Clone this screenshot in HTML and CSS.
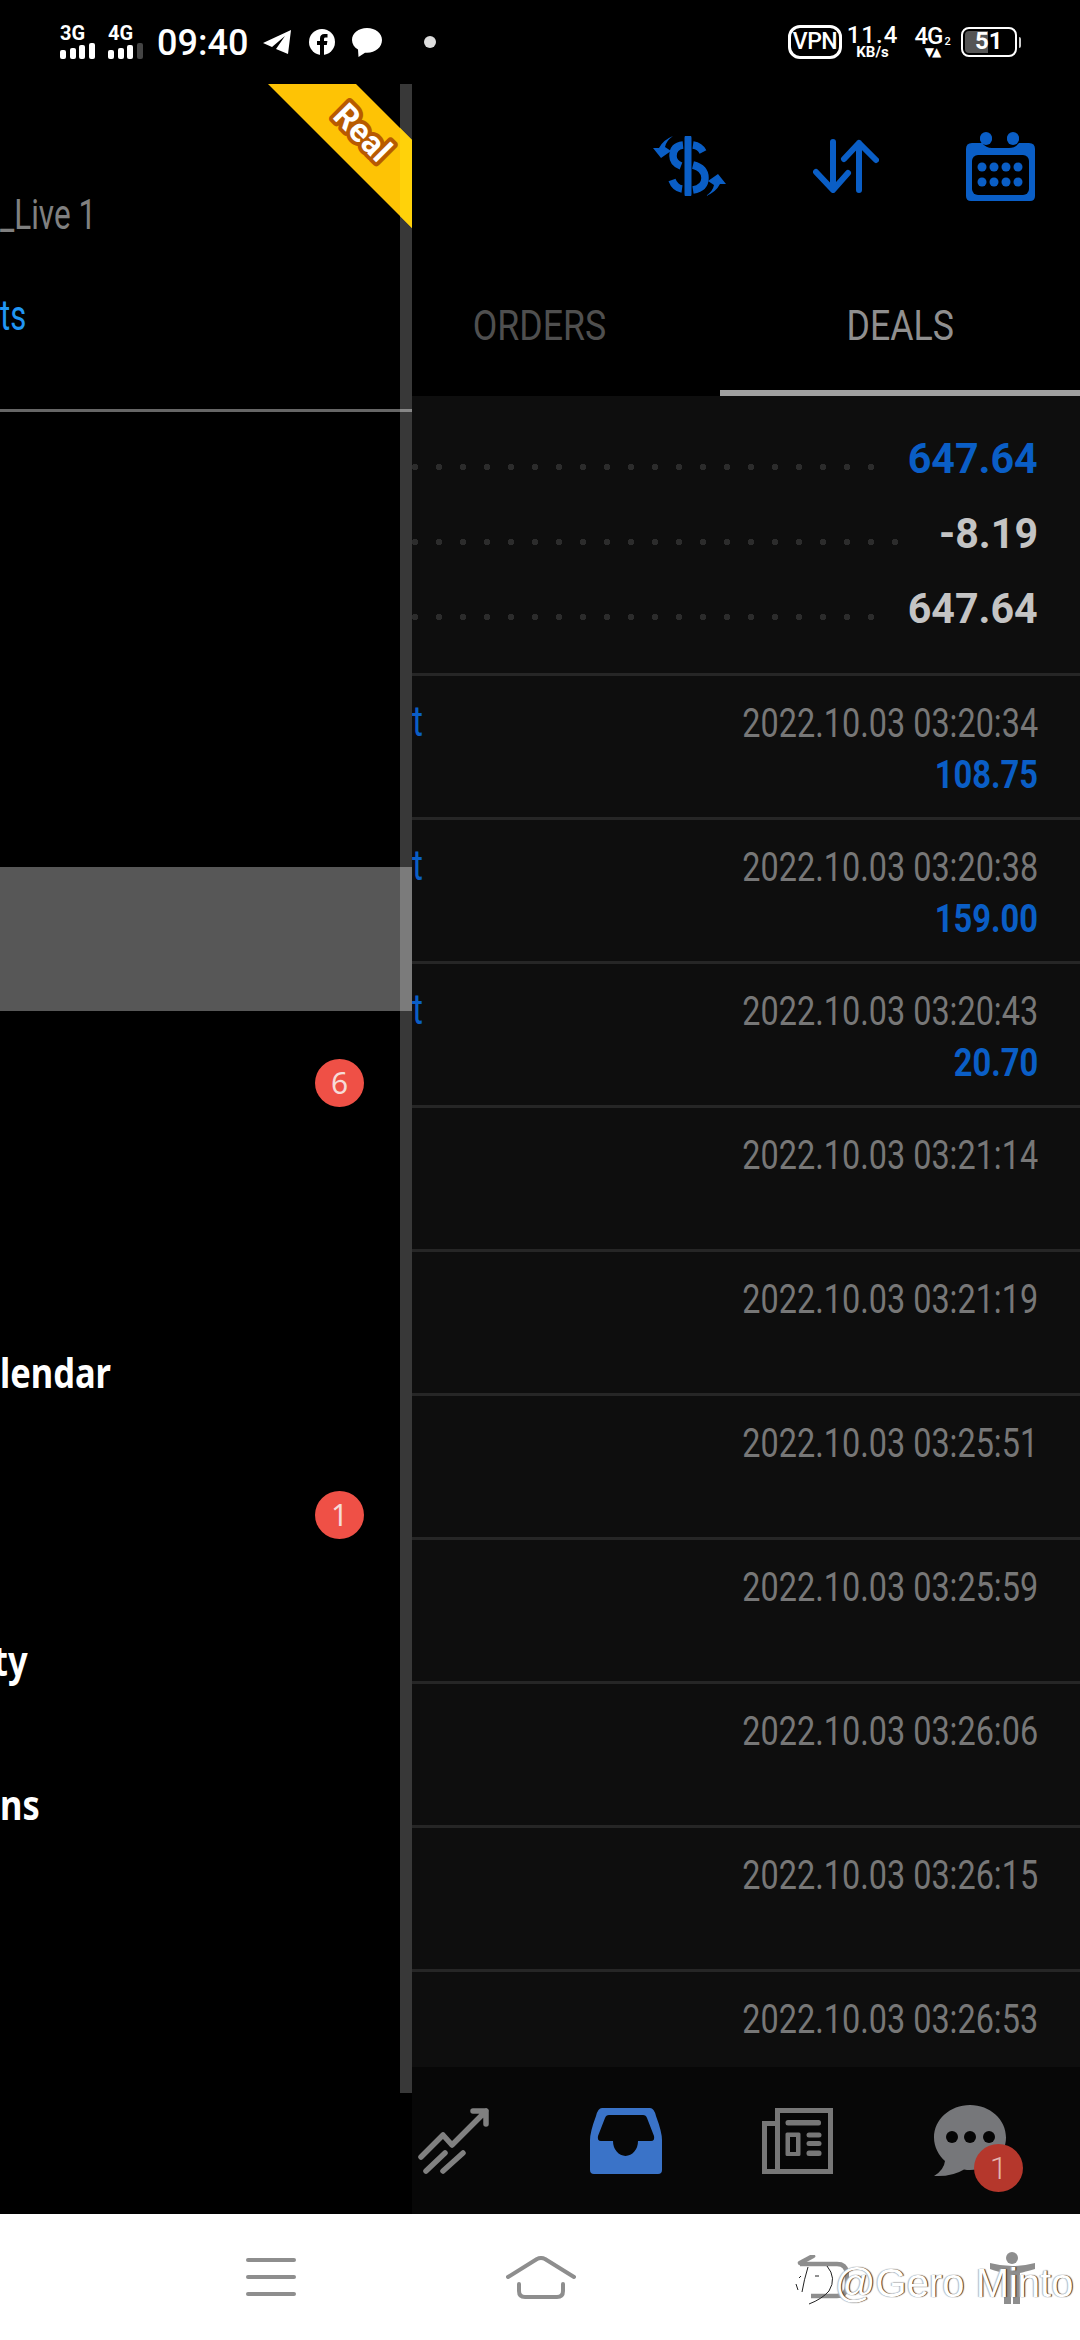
FILE: index.html
```html
<!DOCTYPE html>
<html lang="en">
<head>
  <meta charset="UTF-8" />
  <title>Deals</title>
  <link rel="stylesheet" href="styles.css">
</head>
<body>
  <div class="status-bar">
    <div class="status-left">
      <div class="signal">
        <span class="signal-label">3G</span>
        <div class="signal-bars"><i class="b1"></i><i class="b2"></i><i class="b3"></i><i class="b4"></i></div>
      </div>
      <div class="signal">
        <span class="signal-label">4G</span>
        <div class="signal-bars"><i class="b1"></i><i class="b2"></i><i class="b3"></i><i class="b4 off"></i></div>
      </div>
      <span class="clock">09:40</span>
      <svg class="ico-telegram" width="28" height="24" viewBox="0 0 28 24"><path d="M28 0 0 13l9 4L22 6l-9 13 12 5z" fill="#fff"/></svg>
      <svg class="ico-fb" width="26" height="26" viewBox="0 0 26 26"><circle cx="13" cy="13" r="13" fill="#fff"/><path d="M11 26V16H8v-4h3V9.500Q11 5 15.500 5H18.500v3.600H16.500Q15 8.600 15 10v2h3.400l-.6 4H15v10z" fill="#000"/></svg>
      <svg class="ico-bubble" width="30" height="29" viewBox="0 0 30 29"><path d="M15 0C6.500 0 0 5.300 0 12c0 4 2.300 7.300 6 9.500L6.500 29l6.500-4.200h2C23.500 24.800 30 19 30 12S23.500 0 15 0z" fill="#fff"/></svg>
      <span class="status-dot"></span>
    </div>
    <div class="status-right">
      <span class="vpn">VPN</span>
      <div class="speed"><span class="speed-num">11.4</span><span class="speed-unit">KB/s</span></div>
      <div class="net"><span class="net-type">4G<sub>2</sub></span><span class="net-arrows">▼▲</span></div>
      <div class="battery"><div class="battery-level"></div><span class="battery-num">51</span></div>
      <span class="battery-nub"></span>
    </div>
  </div>

  <div class="main">
    <div class="app-bar">
      <svg width="73" height="60" viewBox="0 0 73 60" fill="none">
        <path d="M35 2V58" stroke="#0a5ec6" stroke-width="7" stroke-linecap="round"/>
        <path d="M30 9Q20 10 20 20Q20 27 28 30M40 9Q47 10 50 16M40 29Q52 32 52 42Q52 52 40 54M29 53Q22 52 19 44" stroke="#0a5ec6" stroke-width="7.500"/>
        <path d="M20 0Q13 5 12 11L18 15 8 22 0 12 6 12Q10 4 20 0z" fill="#0a5ec6"/>
        <path d="M53 60Q60 55 61 49L55 45 65 38 73 48 67 48Q63 56 53 60z" fill="#0a5ec6"/>
      </svg>
      <svg width="66" height="54" viewBox="0 0 66 54" fill="none" stroke="#0a5ec6" stroke-width="6" stroke-linecap="round" stroke-linejoin="round">
        <path d="M20 3V50M3 33 20 51 35 34"/>
        <path d="M46 51V4M31 20 46 4 63 21"/>
      </svg>
      <svg width="69" height="69" viewBox="0 0 69 69">
        <path d="M6 11H16Q20 16 26 16H43Q49 16 53 11H63Q69 11 69 17V64Q69 69 64 69H5Q0 69 0 64V17Q0 11 6 11z" fill="#0a5ec6"/>
        <circle cx="20" cy="6" r="6" fill="#0a5ec6"/><circle cx="47" cy="6" r="6" fill="#0a5ec6"/>
        <circle cx="20" cy="7" r="6" fill="#0a5ec6"/><circle cx="47" cy="7" r="6" fill="#0a5ec6"/>
        <rect x="6" y="23" width="57" height="40" rx="6" fill="#000"/>
        <g fill="#0a5ec6">
          <circle cx="16" cy="35" r="4.500"/><circle cx="28" cy="35" r="4.500"/><circle cx="40" cy="35" r="4.500"/><circle cx="52" cy="35" r="4.500"/>
          <circle cx="16" cy="50" r="4.500"/><circle cx="28" cy="50" r="4.500"/><circle cx="40" cy="50" r="4.500"/><circle cx="52" cy="50" r="4.500"/>
        </g>
      </svg>
    </div>

    <div class="tabs">
      <div class="tab"><span class="narrow">ORDERS</span></div>
      <div class="tab active"><span class="narrow">DEALS</span></div>
    </div>

    <div class="deals">
      <div class="summary">
        <div class="summary-row"><div class="leader"></div><span class="summary-value blue">647.64</span></div>
        <div class="summary-row"><div class="leader"></div><span class="summary-value">-8.19</span></div>
        <div class="summary-row"><div class="leader"></div><span class="summary-value">647.64</span></div>
      </div>
      <div class="deal">
        <span class="deal-type">t</span>
        <div class="deal-info"><span class="deal-date">2022.10.03 03:20:34</span><span class="deal-amount">108.75</span></div>
      </div>
      <div class="deal">
        <span class="deal-type">t</span>
        <div class="deal-info"><span class="deal-date">2022.10.03 03:20:38</span><span class="deal-amount">159.00</span></div>
      </div>
      <div class="deal">
        <span class="deal-type">t</span>
        <div class="deal-info"><span class="deal-date">2022.10.03 03:20:43</span><span class="deal-amount">20.70</span></div>
      </div>
      <div class="deal"><span class="deal-type"></span><div class="deal-info"><span class="deal-date">2022.10.03 03:21:14</span></div></div>
      <div class="deal"><span class="deal-type"></span><div class="deal-info"><span class="deal-date">2022.10.03 03:21:19</span></div></div>
      <div class="deal"><span class="deal-type"></span><div class="deal-info"><span class="deal-date">2022.10.03 03:25:51</span></div></div>
      <div class="deal"><span class="deal-type"></span><div class="deal-info"><span class="deal-date">2022.10.03 03:25:59</span></div></div>
      <div class="deal"><span class="deal-type"></span><div class="deal-info"><span class="deal-date">2022.10.03 03:26:06</span></div></div>
      <div class="deal"><span class="deal-type"></span><div class="deal-info"><span class="deal-date">2022.10.03 03:26:15</span></div></div>
      <div class="deal"><span class="deal-type"></span><div class="deal-info"><span class="deal-date">2022.10.03 03:26:53</span></div></div>
    </div>

    <div class="bottom-tabs">
      <div class="bottom-tab">
        <svg width="72" height="66" viewBox="0 0 72 66" fill="none" stroke="#808080" stroke-width="5.500" stroke-linecap="round" stroke-linejoin="round">
          <path d="M3 49 25 27 34 37 68 3M55 3H68V16M27 45 8 63M45 45 25 63"/>
        </svg>
      </div>
      <div class="bottom-tab">
        <svg width="72" height="66" viewBox="0 0 72 66">
          <path fill-rule="evenodd" fill="#3a73c8" d="M12 0H60Q64 0 66 8Q72 24 72 32V62Q72 66 68 66H4Q0 66 0 62V32Q0 24 6 8Q8 0 12 0ZM19 7Q16 7 15 10L8 28Q7 33 11 33H23A12.500 15 0 0 0 48 33H61Q65 33 64 28L57 10Q56 7 53 7Z"/>
        </svg>
      </div>
      <div class="bottom-tab">
        <svg width="72" height="66" viewBox="0 0 72 66">
          <g fill="none" stroke="#777" stroke-width="5">
            <path d="M15.500 2.500H68.500V63.500H15.500Z"/>
            <path d="M13 15.500H2.500V63.500H15"/>
          </g>
          <g fill="#777">
            <rect x="23.500" y="12" width="35.500" height="5.500" rx="2.500"/>
            <path fill-rule="evenodd" d="M25 24.500H37Q38.500 24.500 38.500 26V46.500Q38.500 48 37 48H25Q23.500 48 23.500 46.500V26Q23.500 24.500 25 24.500ZM28 29V44H34V29Z"/>
            <rect x="44.500" y="24.500" width="15" height="5" rx="2.500"/>
            <rect x="44.500" y="33" width="15" height="5" rx="2.500"/>
            <rect x="44.500" y="42.500" width="15" height="5.500" rx="2.500"/>
          </g>
        </svg>
      </div>
      <div class="bottom-tab">
        <svg width="72" height="72" viewBox="0 0 72 72">
          <path d="M36 0C16 0 0 14.500 0 32.500C0 42 4.500 50 11 56Q10 65 0 71Q18 72 30 64.500Q33 65 36 65C56 65 72 50.500 72 32.500S56 0 36 0Z" fill="#76777a"/>
          <circle cx="18" cy="32" r="6" fill="#050505"/><circle cx="36" cy="32" r="6" fill="#050505"/><circle cx="55" cy="32" r="6" fill="#050505"/>
        </svg>
        <span class="chat-badge">1</span>
      </div>
    </div>

    <!-- drawer lies over the page, half slid out -->
    <div class="drawer">
      <div class="drawer-head">
        <span class="account">_Live 1</span>
        <span class="accounts-link">ts</span>
      </div>
      <div class="menu">
        <div class="menu-item"></div>
        <div class="menu-item"></div>
        <div class="menu-item"></div>
        <div class="menu-item selected"></div>
        <div class="menu-item"><span class="menu-badge">6</span></div>
        <div class="menu-item"></div>
        <div class="menu-item"><span class="menu-label">lendar</span></div>
        <div class="menu-item"><span class="menu-badge">1</span></div>
        <div class="menu-item"><span class="menu-label cut">ty</span></div>
        <div class="menu-item"><span class="menu-label">ns</span></div>
      </div>
      <div class="drawer-thumb"></div>
      <svg class="ribbon" width="144" height="144" viewBox="0 0 144 144">
        <polygon points="0,0 88,0 144,56 144,144" fill="#fec305"/>
        <polygon points="132,44 144,56 144,144 132,132" fill="#ffd20a"/>
        <text class="ribbon-text" x="95" y="60" text-anchor="middle" transform="rotate(45 95 48)">Real</text>
      </svg>
    </div>
  </div>

  <div class="nav-bar">
    <div class="nav-menu"><i></i><i></i><i></i></div>
    <svg class="nav-home" width="70" height="43" viewBox="0 0 70 43" fill="none" stroke="#8e8e8e" stroke-width="4" stroke-linecap="round" stroke-linejoin="round">
      <path d="M2 21 31 3Q35 1 39 3L68 21"/>
      <path d="M13 28V35Q13 41 19 41H51Q57 41 57 35V28"/>
    </svg>
    <svg class="nav-back" width="52" height="44" viewBox="0 0 52 44" fill="none" stroke="#8e8e8e" stroke-width="4.500">
      <path d="M3 9H40Q50 9 50 20V30Q50 41 40 41H14"/>
      <path d="M16 1 3 8" stroke-linecap="round"/>
    </svg>
    <svg class="nav-person" width="48" height="52" viewBox="0 0 48 52">
      <circle cx="23" cy="6" r="6" fill="#8e8e8e"/>
      <path d="M1 11Q23 17 46 11V17Q35 20 31 21V52H24V36H22V52H15V21Q10 20 1 17Z" fill="#8e8e8e"/>
    </svg>
    <svg class="mark-logo" width="42" height="42" viewBox="0 0 42 42" fill="none" stroke="#222" stroke-width="1">
      <path d="M32 2Q42 14 34 27Q27 35 14 40"/>
      <path d="M13 3Q9 16 7 28"/>
      <path d="M6 12 4 14M3 26 1 20"/>
      <path d="M20 12H24"/>
    </svg>
    <span class="watermark">@Gero Minto</span>
  </div>
</body>
</html>
```

FILE: styles.css
```css
* { box-sizing: border-box; }
html, body { margin: 0; padding: 0; }
body {
  width: 1080px;
  height: 2340px;
  overflow: hidden;
  display: flex;
  flex-direction: column;
  background: #000;
  font-family: Roboto, sans-serif;
}

/* status bar */
.status-bar {
  height: 84px;
  display: flex;
  justify-content: space-between;
  align-items: center;
  padding: 0 59px 0 60px;
  color: #fff;
}
.status-left { display: flex; align-items: center; }
.signal { width: 35px; margin-right: 13px; display: flex; flex-direction: column; }
.signal-label { font-size: 20px; font-weight: 700; line-height: 14px; height: 17px; }
.signal-bars { display: flex; align-items: flex-end; justify-content: space-between; height: 16px; }
.signal-bars i { width: 6px; background: #fff; border-radius: 2px; }
.signal-bars .b1 { height: 9px; }
.signal-bars .b2 { height: 11px; }
.signal-bars .b3 { height: 14px; }
.signal-bars .b4 { height: 16px; }
.signal-bars .off { background: #444; }
.clock { font-size: 36px; font-weight: 500; line-height: 40px; margin: 2px 15px 0 1px; }
.ico-telegram { margin-right: 18px; }
.ico-fb { margin-right: 17px; }
.ico-bubble { margin-right: 42px; }
.status-dot { width: 12px; height: 12px; border-radius: 50%; background: #ddd; }

.status-right { display: flex; align-items: center; }
.vpn {
  width: 54px;
  height: 34px;
  border: 3px solid #fff;
  border-radius: 12px;
  font-size: 23px;
  font-weight: 500;
  line-height: 28px;
  text-align: center;
  letter-spacing: -0.5px;
}
.speed { width: 47px; margin-left: 7px; display: flex; flex-direction: column; align-items: center; }
.speed-num { font-size: 24px; font-weight: 500; line-height: 20px; letter-spacing: 1px; white-space: nowrap; }
.speed-unit { font-size: 15px; font-weight: 700; line-height: 13px; margin-top: 1px; }
.net { width: 34px; margin-left: 19px; display: flex; flex-direction: column; align-items: center; }
.net-type { font-size: 24px; font-weight: 500; line-height: 20px; letter-spacing: -1px; white-space: nowrap; }
.net-type sub { font-size: 11px; line-height: 0; vertical-align: -1px; margin-left: 2px; }
.net-arrows { font-family: "DejaVu Sans", sans-serif; font-size: 12px; line-height: 13px; letter-spacing: -2px; }
.battery {
  position: relative;
  width: 56px;
  height: 30px;
  margin-left: 12px;
  border: 2.5px solid #fff;
  border-radius: 8px;
  padding: 2px;
}
.battery-level { width: 23px; height: 100%; background: #555; border-radius: 4px 0 0 4px; }
.battery-num {
  position: absolute;
  left: 12px;
  top: 0;
  font-size: 24px;
  font-weight: 700;
  line-height: 25px;
}
.battery-nub { width: 2px; height: 11px; margin-left: 2px; background: #ccc; border-radius: 0 2px 2px 0; }

/* page under the drawer */
.main {
  position: relative;
  flex: 1;
  min-height: 0;
  display: flex;
  flex-direction: column;
}
.app-bar {
  height: 164px;
  flex: none;
  display: flex;
  align-items: center;
  justify-content: flex-end;
  gap: 87px;
  padding-right: 45px;
}
.tabs { height: 148px; flex: none; display: flex; padding-left: 360px; }
.tab {
  width: 360px;
  padding-top: 12px;
  display: flex;
  align-items: center;
  justify-content: center;
  border-bottom: 6px solid transparent;
  font-size: 42px;
  color: #4f4f4f;
}
.tab.active { color: #8f8f8f; border-bottom-color: #a0a0a0; }
.narrow { display: inline-block; transform: scaleX(0.85); }

.deals { flex: 1; min-height: 0; overflow: hidden; background: #0e0e0e; }
.summary { height: 277px; padding: 25px 42px 0 412px; }
.summary-row { height: 75px; display: flex; align-items: center; }
.leader {
  flex: 1;
  height: 75px;
  margin-right: 24px;
  background-image: radial-gradient(circle at 12px 46px, #2c2c2c 3px, transparent 3.5px);
  background-size: 24px 75px;
  background-position: 15px 0;
}
.summary-value {
  font-size: 42px;
  font-weight: 700;
  color: #c4c4c4;
  line-height: 75px;
  transform: scaleX(0.98);
  transform-origin: right;
}
.summary-value.blue { color: #0a5ec6; }

.deal {
  height: 144px;
  display: flex;
  justify-content: space-between;
  padding: 24px 42px 0 412px;
  border-top: 3px solid #262626;
}
.deal-type { font-size: 42px; line-height: 44px; color: #0a5ec6; transform: scaleX(0.8); transform-origin: left; }
.deal-info { display: flex; flex-direction: column; align-items: flex-end; }
.deal-date {
  font-size: 40px;
  line-height: 48px;
  color: #777;
  white-space: nowrap;
  transform: scaleX(0.81);
  transform-origin: right;
}
.deal-amount {
  font-size: 38px;
  font-weight: 700;
  line-height: 54px;
  color: #0a5ec6;
  transform: scaleX(0.86);
  transform-origin: right;
}

.bottom-tabs {
  height: 147px;
  flex: none;
  display: flex;
  justify-content: flex-end;
  align-items: center;
  padding-right: 24px;
  background: #070707;
}
.bottom-tab { position: relative; width: 172px; display: flex; justify-content: center; }
.chat-badge {
  position: absolute;
  left: 90px;
  top: 39px;
  width: 49px;
  height: 48px;
  border-radius: 50%;
  background: #b5372c;
  color: #e3b5ae;
  font-size: 32px;
  font-weight: 300;
  line-height: 48px;
  text-align: center;
}

/* drawer */
.drawer {
  position: absolute;
  left: 0;
  top: 0;
  bottom: 0;
  width: 412px;
  overflow: hidden;
  background: #000;
}
.drawer-head {
  height: 328px;
  padding-top: 106px;
  display: flex;
  flex-direction: column;
  border-bottom: 3px solid #666;
  font-size: 42px;
  line-height: 50px;
}
.account { color: #808080; transform: scaleX(0.75); transform-origin: left; white-space: nowrap; }
.accounts-link { color: #2196f3; margin-top: 51px; transform: scaleX(0.74); transform-origin: left; }
.menu { padding-top: 23px; }
.menu-item { height: 144px; display: flex; align-items: center; }
.menu-item.selected { background: #575757; }
.menu-label {
  font-family: "Noto Sans", sans-serif;
  font-size: 42px;
  font-weight: 700;
  color: #fff;
  transform: scaleX(0.82);
  transform-origin: left;
}
.menu-label.cut { margin-left: -7px; }
.menu-badge {
  width: 49px;
  height: 48px;
  margin: 0 48px 0 auto;
  border-radius: 50%;
  background: #ef5046;
  color: #f6dbd8;
  font-family: "Noto Sans", sans-serif;
  font-size: 30px;
  line-height: 48px;
  text-align: center;
}
.drawer-thumb {
  position: absolute;
  right: 0;
  top: 0;
  width: 12px;
  height: 2009px;
  background: rgba(255, 255, 255, 0.22);
}
.ribbon { position: absolute; left: 268px; top: 0; }
.ribbon-text {
  font-family: Roboto, sans-serif;
  font-size: 33px;
  font-weight: 700;
  fill: #fff;
  stroke: #b85a00;
  stroke-width: 8px;
  stroke-linejoin: round;
  paint-order: stroke;
}

/* system nav */
.nav-bar {
  position: relative;
  height: 126px;
  flex: none;
  display: flex;
  align-items: center;
  padding-left: 246px;
  background: #fff;
}
.nav-menu { width: 50px; height: 38px; display: flex; flex-direction: column; justify-content: space-between; }
.nav-menu i { height: 4px; border-radius: 2px; background: #8e8e8e; }
.nav-home { margin-left: 210px; }
.nav-back { margin-left: 221px; }
/* floating button and watermark sit on top of the nav bar */
.nav-person { position: absolute; left: 989px; top: 38px; }
.mark-logo { position: absolute; left: 795px; top: 50px; }
.watermark {
  position: absolute;
  left: 835px;
  top: 47px;
  font-family: "Liberation Sans", sans-serif;
  font-size: 40px;
  color: #fff;
  white-space: nowrap;
  text-shadow: 1px 0 1px #222, -1px 0 1px #bbb;
}
```
